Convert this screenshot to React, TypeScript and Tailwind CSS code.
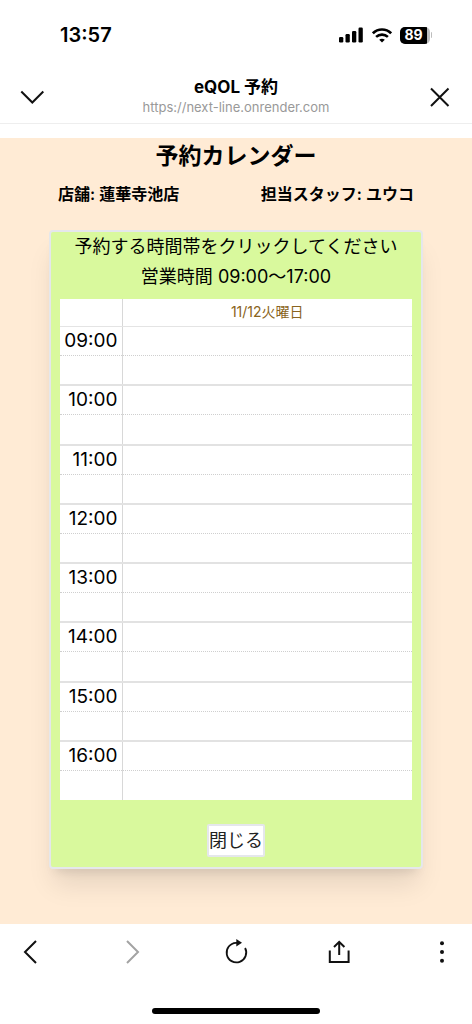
import React from "react";

const hours = [
  "09:00",
  "10:00",
  "11:00",
  "12:00",
  "13:00",
  "14:00",
  "15:00",
  "16:00",
];

const StatusBar = () => (
  <div className="flex h-[70px] items-center justify-between pl-[60px] pr-[40px]">
    <span className="text-xl leading-6 font-semibold">13:57</span>
    <div className="flex items-center gap-2">
      <svg width="25" height="16" viewBox="0 0 25 16" aria-hidden="true">
        <rect x="0" y="10" width="4.3" height="5.5" rx="1.2" />
        <rect x="6.5" y="7" width="4.3" height="8.5" rx="1.2" />
        <rect x="13" y="4" width="4.3" height="11.5" rx="1.2" />
        <rect x="19.5" y="0.5" width="4.3" height="15" rx="1.2" />
      </svg>
      <svg
        width="20"
        height="15"
        viewBox="0 0 20 15"
        fill="none"
        stroke="black"
        strokeWidth="2.6"
        aria-hidden="true"
      >
        <path d="M0.9 5.3C6 0.3 14 0.3 19.1 5.3" />
        <path d="M4.1 8.9C7.4 5.8 12.6 5.8 15.9 8.9" />
        <path d="M7.2 11.8C8.8 10.4 11.2 10.4 12.8 11.8L10 14.5Z" fill="black" stroke="none" />
      </svg>
      <div className="flex items-center gap-px">
        <div className="flex h-[17px] w-[30px] overflow-hidden rounded-[5px] bg-[#bdbdbd]">
          <span className="flex w-[27px] items-center justify-center bg-black text-sm leading-4 font-bold text-white">
            89
          </span>
        </div>
        <span className="h-1.5 w-px rounded-r-full bg-[#bdbdbd]" />
      </div>
    </div>
  </div>
);

const BrowserHeader = () => (
  <header className="flex h-[54px] items-center justify-between border-b border-[#eeeeee] px-5">
    <button type="button" aria-label="最小化" className="flex h-6 w-6 items-center justify-center">
      <svg width="24" height="24" viewBox="0 0 24 24" fill="none" stroke="#111" strokeWidth="2">
        <path d="M1.3 6.5L12.3 17.5L23.3 6.5" />
      </svg>
    </button>
    <div className="flex flex-col items-center">
      <h1 className="text-[17px] leading-5 font-bold">eQOL 予約</h1>
      <p className="text-[13px] leading-5 text-[#999999]">
        https://next-line.onrender.com
      </p>
    </div>
    <button type="button" aria-label="閉じる" className="flex h-6 w-6 items-center justify-center">
      <svg width="24" height="24" viewBox="0 0 24 24" fill="none" stroke="#111" strokeWidth="2">
        <path d="M3 3.5L20.5 21M20.5 3.5L3 21" />
      </svg>
    </button>
  </header>
);

const Schedule = () => (
  <table className="h-[501px] w-full table-fixed border-collapse bg-white">
    <thead>
      <tr className="h-[27px]">
        <th className="w-[62px] border-r border-b border-r-[#d8d8d8] border-b-[#e4e4e4]" />
        <th className="border-b border-[#e4e4e4] p-0 text-sm leading-5 font-normal text-[#8a6420]">
          11/12火曜日
        </th>
      </tr>
    </thead>
    <tbody>
      {hours.map((hour, index) => (
        <React.Fragment key={hour}>
          <tr className={index > 0 ? "h-[29px] border-t-2 border-[#e2e2e2]" : "h-[29px]"}>
            <th className="border-r border-r-[#d8d8d8] py-0 pr-1 pl-0 text-right text-[19px] leading-6 font-normal">
              {hour}
            </th>
            <td className="p-0" />
          </tr>
          <tr className="h-[29px]">
            <td className="border-t border-r border-t-[#cfcfcf] border-r-[#d8d8d8] p-0 [border-top-style:dotted]" />
            <td className="border-t border-dotted border-[#cfcfcf] p-0" />
          </tr>
        </React.Fragment>
      ))}
    </tbody>
  </table>
);

const Toolbar = () => (
  <footer className="bg-white">
    <nav className="flex h-14 items-center justify-between px-1.5">
      <button type="button" aria-label="戻る" className="flex h-12 w-12 items-center justify-center">
        <svg width="24" height="24" viewBox="0 0 24 24" fill="none" stroke="#111" strokeWidth="2">
          <path d="M18 1L7 12L18 23" />
        </svg>
      </button>
      <button type="button" aria-label="進む" className="flex h-12 w-12 items-center justify-center">
        <svg width="24" height="24" viewBox="0 0 24 24" fill="none" stroke="#a3a3a3" strokeWidth="2">
          <path d="M6 1L17 12L6 23" />
        </svg>
      </button>
      <button type="button" aria-label="再読み込み" className="flex h-12 w-12 items-center justify-center">
        <svg
          className="overflow-visible"
          width="24"
          height="24"
          viewBox="0 0 24 24"
          fill="none"
          stroke="#111"
          strokeWidth="1.8"
        >
          <path d="M13 2.8H12A9.8 9.8 0 1 0 21.1 8" />
          <path d="M12.3 -1V6.4L18 2.7Z" fill="#111" stroke="none" />
        </svg>
      </button>
      <button type="button" aria-label="共有" className="flex h-12 w-12 items-center justify-center">
        <svg width="24" height="24" viewBox="0 0 24 24" fill="none" stroke="#111" strokeWidth="2">
          <path d="M2.8 10.5V22H21.6V10.5" />
          <path d="M12.2 15V2M7 7L12.2 1.8L17.4 7" />
        </svg>
      </button>
      <button type="button" aria-label="メニュー" className="flex h-12 w-12 items-center justify-center">
        <svg width="24" height="24" viewBox="0 0 24 24" fill="#111">
          <circle cx="12" cy="3.3" r="2" />
          <circle cx="12" cy="12" r="2" />
          <circle cx="12" cy="20.7" r="2" />
        </svg>
      </button>
    </nav>
    <div className="flex h-11 items-end justify-center pb-2.5">
      <div className="h-1.5 w-[168px] rounded-full bg-black" />
    </div>
  </footer>
);

const App = () => {
  return (
    <div className="flex min-h-screen flex-col bg-white font-[Inter,'Noto_Sans_CJK_JP',sans-serif] text-black">
      <StatusBar />
      <BrowserHeader />

      <main className="mt-3.5 flex-1 bg-[#ffebd5] px-12 pb-12">
        <h2 className="text-center text-[23px] leading-9 font-bold">
          予約カレンダー
        </h2>
        <div className="mt-2 flex justify-between px-2.5 text-base leading-6 font-semibold">
          <p>店舗: 蓮華寺池店</p>
          <p>担当スタッフ: ユウコ</p>
        </div>

        <section className="mx-px mt-6 rounded border-2 border-gray-200 bg-[#d9f99d] px-[9px] pb-2.5 shadow-xl">
          <div className="text-center text-lg leading-[30px]">
            <p>予約する時間帯をクリックしてください</p>
            <p>営業時間 09:00〜17:00</p>
          </div>
          <div className="mt-[7px]">
            <Schedule />
          </div>
          <div className="mt-6 flex justify-center">
            <button
              type="button"
              className="rounded-xs border-2 border-gray-200 bg-white text-lg leading-[29px] text-[#222]"
            >
              閉じる
            </button>
          </div>
        </section>
      </main>

      <Toolbar />
    </div>
  );
};

export default App;
